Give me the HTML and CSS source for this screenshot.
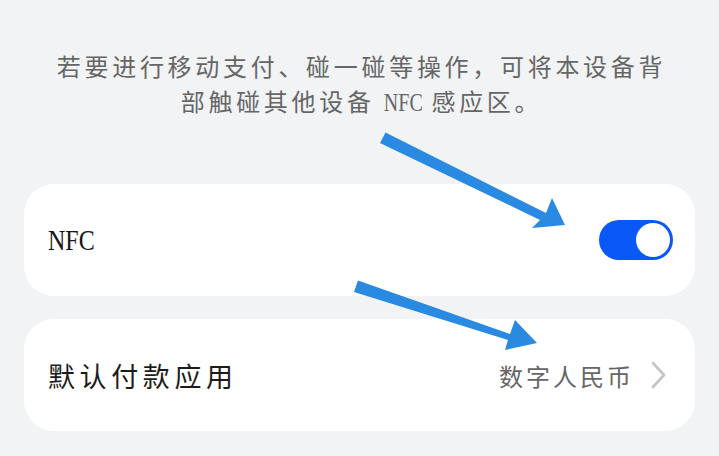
FILE: index.html
```html
<!DOCTYPE html>
<html lang="zh-CN">
<head>
<meta charset="utf-8">
<title>NFC</title>
<link rel="stylesheet" href="styles.css">
</head>
<body>
<main class="page">
  <p class="hint">若要进行移动支付、碰一碰等操作，可将本设备背<br>部触碰其他设备 <span class="latin">NFC</span> 感应区。</p>

  <section class="card">
    <span class="label latin">NFC</span>
    <span class="switch" role="switch" aria-checked="true"><span class="knob"></span></span>
  </section>

  <section class="card">
    <span class="label">默认付款应用</span>
    <span class="value">数字人民币
      <svg class="chevron" viewBox="0 0 16 28" width="16" height="28" aria-hidden="true">
        <path d="M2 2 L13 14 L2 26" fill="none" stroke="#c4c4c4" stroke-width="2.6" stroke-linecap="round" stroke-linejoin="round"/>
      </svg>
    </span>
  </section>

  <!-- annotation arrows drawn on top of the settings list -->
  <svg class="arrows" viewBox="0 0 719 456" width="719" height="456" aria-hidden="true">
    <g fill="#2a8ae2" stroke="none">
      <path d="M385.5 132.5 L546 213 L552 198 L565 225 L532 228 L540 220 L380 143 Z"/>
      <path d="M358 280.5 L510 334 L515 320 L537 343 L505 350 L508 340 L354 292 Z"/>
    </g>
  </svg>
</main>
</body>
</html>
```

FILE: styles.css
```css
html, body {
  margin: 0;
  padding: 0;
  background: #f1f3f5;
}

.page {
  position: relative;
  width: 719px;
  height: 456px;
  box-sizing: border-box;
  padding: 48px 24px 0;
  display: flex;
  flex-direction: column;
  gap: 23px;
  font-family: "Noto Sans CJK SC", "Noto Sans", sans-serif;
  overflow: hidden;
}

/* narrow serif for the Latin "NFC" */
.latin {
  display: inline-block;
  font-family: "Liberation Serif", serif;
  letter-spacing: 0;
  transform: scaleX(0.8);
  transform-origin: left center;
}

.hint {
  margin: 0 0 41px;
  text-align: center;
  font-size: 24px;
  line-height: 35px;
  letter-spacing: 3.7px;
  color: #666666;
  padding-left: 4px;
}

.hint .latin {
  font-size: 25px;
  margin: 0 -5px;
  transform-origin: center center;
}

.card {
  height: 112px;
  background: #ffffff;
  border-radius: 30px;
  display: flex;
  align-items: center;
  justify-content: space-between;
  padding: 0 22px 0 24px;
}

.label {
  font-size: 27px;
  letter-spacing: 4.6px;
  color: #1c1c1c;
}

.label.latin {
  font-size: 30px;
  letter-spacing: 0;
  color: #161616;
}

.switch {
  position: relative;
  width: 74px;
  height: 40px;
  border-radius: 20px;
  background: #0a59f7;
}

.knob {
  position: absolute;
  top: 3px;
  right: 3px;
  width: 34px;
  height: 34px;
  border-radius: 50%;
  background: #ffffff;
}

.value {
  display: flex;
  align-items: center;
  gap: 17px;
  margin-right: 6px;
  font-size: 24px;
  letter-spacing: 3px;
  color: #666666;
}

.chevron {
  display: block;
}

.arrows {
  position: absolute;
  left: 0;
  top: 0;
  pointer-events: none;
}
```
